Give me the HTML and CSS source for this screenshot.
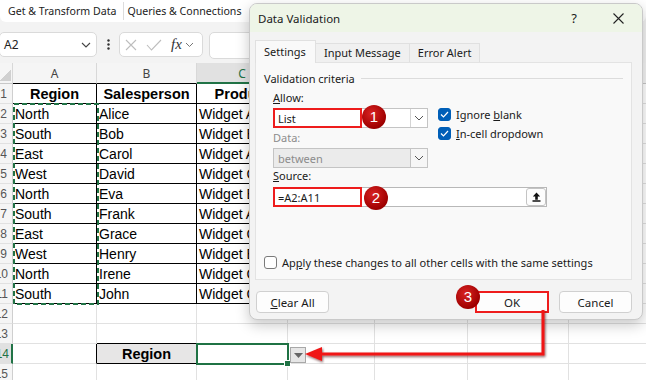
FILE: index.html
```html
<!DOCTYPE html>
<html lang="en">
<head>
<meta charset="UTF-8">
<meta name="viewport" content="width=device-width, initial-scale=1.0">
<link rel="stylesheet" href="styles.css">
</head>
<body>
<div class="window">

  <div class="ribbon">
    <span class="group">Get &amp; Transform Data</span>
    <span class="group sep">Queries &amp; Connections</span>
  </div>

  <div class="formula-bar">
    <div class="name-box">
      <span>A2</span>
      <svg width="10" height="6" viewBox="0 0 10 6"><path d="M1 1l4 4 4-4" fill="none" stroke="#444" stroke-width="1.1"/></svg>
    </div>
    <div class="more">
      <svg width="3" height="11" viewBox="0 0 3 11"><circle cx="1.5" cy="1.5" r="1.2" fill="#333"/><circle cx="1.5" cy="5.5" r="1.2" fill="#333"/><circle cx="1.5" cy="9.5" r="1.2" fill="#333"/></svg>
    </div>
    <div class="fx-box">
      <svg width="12" height="12" viewBox="0 0 12 12"><path d="M1 1l10 10M11 1L1 11" stroke="#bdbdbd" stroke-width="1.1"/></svg>
      <svg width="16" height="12" viewBox="0 0 16 12"><path d="M1 6l4.5 5L15 1" fill="none" stroke="#bdbdbd" stroke-width="1.1"/></svg>
      <span class="fx">fx</span>
      <svg width="9" height="6" viewBox="0 0 9 6"><path d="M1 1l3.5 3.5L8 1" fill="none" stroke="#777" stroke-width="1"/></svg>
    </div>
    <div class="formula-input"></div>
  </div>

  <table class="sheet">
    <colgroup>
      <col style="width:13px"><col style="width:84px"><col style="width:100px"><col style="width:91px">
      <col style="width:87px"><col style="width:93px"><col style="width:101px"><col style="width:87px">
    </colgroup>
    <tr class="col-head">
      <th class="corner"></th><th class="top">A</th><th class="top">B</th><th class="top cur">C</th><th>D</th><th>E</th><th>F</th><th>G</th>
    </tr>
    <tr><th class="rh">1</th><td class="d hd">Region</td><td class="d hd">Salesperson</td><td class="d hd">Product</td><td></td><td></td><td></td><td></td></tr>
    <tr><th class="rh">2</th><td class="d">North</td><td class="d">Alice</td><td class="d">Widget A</td><td></td><td></td><td></td><td></td></tr>
    <tr><th class="rh">3</th><td class="d">South</td><td class="d">Bob</td><td class="d">Widget B</td><td></td><td></td><td></td><td></td></tr>
    <tr><th class="rh">4</th><td class="d">East</td><td class="d">Carol</td><td class="d">Widget A</td><td></td><td></td><td></td><td></td></tr>
    <tr><th class="rh">5</th><td class="d">West</td><td class="d">David</td><td class="d">Widget C</td><td></td><td></td><td></td><td></td></tr>
    <tr><th class="rh">6</th><td class="d">North</td><td class="d">Eva</td><td class="d">Widget B</td><td></td><td></td><td></td><td></td></tr>
    <tr><th class="rh">7</th><td class="d">South</td><td class="d">Frank</td><td class="d">Widget A</td><td></td><td></td><td></td><td></td></tr>
    <tr><th class="rh">8</th><td class="d">East</td><td class="d">Grace</td><td class="d">Widget C</td><td></td><td></td><td></td><td></td></tr>
    <tr><th class="rh">9</th><td class="d">West</td><td class="d">Henry</td><td class="d">Widget B</td><td></td><td></td><td></td><td></td></tr>
    <tr><th class="rh">10</th><td class="d">North</td><td class="d">Irene</td><td class="d">Widget C</td><td></td><td></td><td></td><td></td></tr>
    <tr><th class="rh">11</th><td class="d">South</td><td class="d">John</td><td class="d">Widget C</td><td></td><td></td><td></td><td></td></tr>
    <tr><th class="rh">12</th><td></td><td></td><td></td><td></td><td></td><td></td><td></td></tr>
    <tr><th class="rh">13</th><td></td><td class="above-box"></td><td></td><td></td><td></td><td></td><td></td></tr>
    <tr><th class="rh cur">14</th><td class="left-of-box"></td><td class="d hd lookup">Region</td><td></td><td></td><td></td><td></td><td></td></tr>
    <tr><th class="rh">15</th><td></td><td></td><td></td><td></td><td></td><td></td><td></td></tr>
  </table>

  <!-- copy marquee round A2:A11 -->
  <svg class="ants" width="86" height="202" viewBox="0 0 86 202">
    <rect x="1" y="1" width="84" height="200" fill="none" stroke="#217346" stroke-width="2" stroke-dasharray="5 3"/>
  </svg>

  <div class="active-cell"><span class="handle"></span></div>
  <div class="cell-drop">
    <svg width="9" height="5" viewBox="0 0 9 5"><path d="M0 0h9L4.5 5z" fill="#666"/></svg>
  </div>

  <div class="dialog">
    <div class="title-bar">
      <span class="title">Data Validation</span>
      <span class="help">?</span>
      <svg class="close" width="11" height="11" viewBox="0 0 11 11"><path d="M0.5 0.5l10 10M10.5 0.5l-10 10" stroke="#222" stroke-width="1.1"/></svg>
    </div>
    <div class="dialog-body">
      <div class="tabs">
        <div class="tab active">Settings</div>
        <div class="tab">Input Message</div>
        <div class="tab">Error Alert</div>
      </div>
      <div class="panel">
        <div class="legend"><span>Validation criteria</span></div>
        <div class="criteria">
          <div class="crit-left">
            <div class="label"><u>A</u>llow:</div>
            <div class="select">
              <span class="value">List</span>
              <span class="mark"></span>
              <span class="chev"><svg width="10" height="6" viewBox="0 0 10 6"><path d="M1 1l4 4 4-4" fill="none" stroke="#555" stroke-width="1"/></svg></span>
            </div>
            <div class="label muted">Data:</div>
            <div class="select disabled">
              <span class="value">between</span>
              <span class="chev"><svg width="10" height="6" viewBox="0 0 10 6"><path d="M1 1l4 4 4-4" fill="none" stroke="#555" stroke-width="1"/></svg></span>
            </div>
          </div>
          <div class="checks">
            <div class="check"><span class="box on"><svg width="9" height="7" viewBox="0 0 9 7"><path d="M1 3.5l2.5 2.5L8 1" fill="none" stroke="#fff" stroke-width="1.2"/></svg></span><span>Ignore <u>b</u>lank</span></div>
            <div class="check"><span class="box on"><svg width="9" height="7" viewBox="0 0 9 7"><path d="M1 3.5l2.5 2.5L8 1" fill="none" stroke="#fff" stroke-width="1.2"/></svg></span><span><u>I</u>n-cell dropdown</span></div>
          </div>
        </div>
        <div class="label"><u>S</u>ource:</div>
        <div class="source">
          <span class="value">=A2:A11</span>
          <span class="mark"></span>
          <span class="ref-btn"><svg width="9" height="10" viewBox="0 0 9 10"><path d="M4.5 0.5L0.8 4.5h2.4v3.2h2.6V4.5h2.4z" fill="#111"/><path d="M0.5 9h8" stroke="#111" stroke-width="1.4"/></svg></span>
        </div>
        <div class="check apply"><span class="box"></span><span>Ap<u>p</u>ly these changes to all other cells with the same settings</span></div>
      </div>
      <div class="buttons">
        <button class="btn"><u>C</u>lear All</button>
        <span class="spacer"></span>
        <button class="btn ok">OK</button>
        <button class="btn">Cancel</button>
      </div>
    </div>
  </div>

  <!-- annotations -->
  <span class="badge b1">1</span>
  <span class="badge b2">2</span>
  <span class="badge b3">3</span>
  <svg class="arrow" width="252" height="62" viewBox="0 0 252 62">
    <g filter="url(#sh)">
      <path d="M243 5V49H20" fill="none" stroke="#f01818" stroke-width="3"/>
      <path d="M5 49L22 42V56z" fill="#f01818"/>
    </g>
    <defs>
      <filter id="sh" x="-10%" y="-20%" width="120%" height="160%">
        <feDropShadow dx="1" dy="1.5" stdDeviation="0.8" flood-color="#400" flood-opacity="0.6"/>
      </filter>
    </defs>
  </svg>

</div>
</body>
</html>
```

FILE: styles.css
```css
body {
  margin: 0;
  background: #f3f3f3;
  font-family: "Liberation Sans", Arial, sans-serif;
}

.window {
  position: relative;
  width: 646px;
  height: 380px;
  overflow: hidden;
  background: #f3f3f3;
}

/* ribbon strip */
.ribbon {
  height: 22px;
  display: flex;
  align-items: center;
  background: #fff;
  border-radius: 0 0 6px 6px;
  font: 10.6px "Noto Sans", sans-serif;
  color: #222;
}

.group {
  padding: 0 7px 0 8px;
}

.group.sep {
  border-left: 1px solid #dcdcdc;
  padding-left: 3px;
  height: 18px;
  line-height: 18px;
}

/* formula bar */
.formula-bar {
  height: 41px;
  display: flex;
  align-items: flex-start;
  padding-top: 10px;
  box-sizing: border-box;
}

.name-box {
  width: 98px;
  height: 25px;
  margin-left: -1px;
  box-sizing: border-box;
  display: flex;
  align-items: center;
  justify-content: space-between;
  padding: 0 5px 0 4px;
  background: #fff;
  border: 1px solid #dadada;
  border-radius: 5px;
  font: 12px "Noto Sans", sans-serif;
  color: #222;
}

.more {
  width: 22px;
  height: 25px;
  display: flex;
  align-items: center;
  justify-content: center;
}

.fx-box {
  width: 84px;
  height: 25px;
  box-sizing: border-box;
  display: flex;
  align-items: center;
  gap: 9px;
  padding-left: 5px;
  background: #fff;
  border: 1px solid #dadada;
  border-radius: 5px;
}

.fx {
  font: italic 15px "Liberation Serif", serif;
  color: #333;
  margin-right: -6px;
}

.formula-input {
  width: 60px;
  height: 25px;
  margin-left: 6px;
  background: #fff;
  border: 1px solid #dadada;
  border-radius: 5px;
}

/* grid */
.sheet {
  border-collapse: separate;
  border-spacing: 0;
  table-layout: fixed;
  width: 656px;
  background: #fff;
  font-size: 14px;
  color: #000;
}

.sheet tr {
  height: 20px;
}

.sheet td,
.sheet th {
  padding: 0 2px;
  border-right: 1px solid #e1e1e1;
  border-bottom: 1px solid #e1e1e1;
  white-space: nowrap;
  overflow: hidden;
  text-align: left;
  font-weight: normal;
}

.sheet .col-head {
  height: 21px;
}

.col-head th {
  background: #f5f5f5;
  border-right: 1px solid #d8d8d8;
  border-bottom: 1px solid #c8c8c8;
  text-align: center;
  font: 12px "Noto Sans", sans-serif;
  color: #444;
}

.col-head th.top {
  border-bottom-color: #000;
}

.col-head th.cur {
  background: #e1e1e1;
  color: #217346;
  border-bottom: 1px solid #217346;
  box-shadow: inset 0 -1px 0 #217346;
}

.col-head th.corner {
  background: #f5f5f5 linear-gradient(135deg, transparent 55%, #d0d0d0 55%) no-repeat 0 3px / 11px 15px;
}

.sheet th.rh {
  direction: rtl;
  text-align: right;
  padding: 0 5px 0 0;
  background: #f5f5f5;
  border-right: 1px solid #cfcfcf;
  font-size: 12px;
  color: #555;
}

.sheet th.rh.cur {
  background: #e1e1e1;
  color: #217346;
  border-right: 2px solid #217346;
  padding-right: 4px;
}

.sheet td.d {
  border-right-color: #000;
  border-bottom-color: #000;
}

.sheet td.hd {
  font-weight: bold;
  text-align: center;
  font-size: 14.5px;
}

.sheet td.lookup {
  background: #e7e6e6;
}

.sheet td.above-box {
  border-bottom-color: #000;
}

.sheet td.left-of-box {
  border-right-color: #000;
}

/* overlays on the grid */
.ants {
  position: absolute;
  left: 13px;
  top: 103px;
}

.active-cell {
  position: absolute;
  left: 196px;
  top: 343px;
  width: 93px;
  height: 22px;
  box-sizing: border-box;
  border: 2px solid #1f7244;
}

.handle {
  position: absolute;
  right: -4px;
  bottom: -4px;
  width: 5px;
  height: 5px;
  background: #1f7244;
  border: 1px solid #fff;
}

.cell-drop {
  position: absolute;
  left: 290px;
  top: 347px;
  width: 16px;
  height: 16px;
  box-sizing: border-box;
  display: flex;
  align-items: center;
  justify-content: center;
  background: #e6e6e6;
  border: 1px solid #a8a8a8;
}

/* dialog */
.dialog {
  position: absolute;
  left: 249px;
  top: 3px;
  width: 394px;
  height: 317px;
  box-sizing: border-box;
  background: #f3f3f3;
  border: 1px solid #c9c9c9;
  border-radius: 8px;
  box-shadow: 0 5px 14px rgba(0, 0, 0, 0.22);
  overflow: hidden;
  font: 11px "Noto Sans", sans-serif;
  color: #1a1a1a;
}

.title-bar {
  height: 28px;
  display: flex;
  align-items: center;
  padding: 0 18px 0 8px;
  background: #eef5e7;
}

.title {
  flex: 1;
  font-size: 11.5px;
}

.help {
  font-size: 13px;
  margin-right: 36px;
}

.dialog-body {
  padding: 8px 10px 0 5px;
}

.tabs {
  display: flex;
  align-items: flex-end;
  height: 22px;
  position: relative;
  z-index: 1;
}

.tab {
  height: 19px;
  box-sizing: border-box;
  padding: 0 8px;
  line-height: 18px;
  background: #f0f0f0;
  border: 1px solid #e0e0e0;
  border-bottom: none;
}

.tab + .tab {
  border-left: none;
}

.tab.active {
  height: 23px;
  line-height: 22px;
  margin-bottom: -1px;
  background: #f9f9f9;
  width: 61px;
}

.panel {
  height: 218px;
  box-sizing: border-box;
  padding: 7px 8px 0 8px;
  background: #f9f9f9;
  border: 1px solid #e3e3e3;
}

.legend {
  display: flex;
  align-items: center;
  height: 16px;
}

.legend::after {
  content: "";
  flex: 1;
  height: 1px;
  margin: 0 0 0 6px;
  background: #dcdcdc;
}

.criteria {
  display: flex;
  gap: 10px;
  margin: 4px 0 0 9px;
}

.crit-left {
  width: 155px;
}

.label {
  height: 16px;
  line-height: 16px;
  margin-left: 9px;
}

.crit-left .label {
  margin-left: 0;
}

.crit-left .select + .label {
  margin-top: 2px;
}

.label.muted {
  color: #8c8c8c;
}

.select {
  position: relative;
  height: 20px;
  margin-top: 2px;
  box-sizing: border-box;
  display: flex;
  align-items: center;
  background: #fff;
  border: 1px solid #c4c4c4;
}

.value {
  flex: 1;
  padding-left: 4px;
}

.chev {
  width: 16px;
  height: 18px;
  display: flex;
  align-items: center;
  justify-content: center;
  border-left: 1px solid #d4d4d4;
}

.select.disabled {
  background: #ebebeb;
  color: #8c8c8c;
}

.select.disabled .chev {
  background: #f6f6f6;
  border-left-color: #c4c4c4;
}

.mark {
  position: absolute;
  left: -1px;
  top: -1px;
  width: 89px;
  height: 20px;
  box-sizing: border-box;
  border: 2px solid #ee1c1c;
}

.checks {
  padding-top: 18px;
  display: flex;
  flex-direction: column;
  gap: 6px;
}

.check {
  display: flex;
  align-items: center;
  height: 13px;
}

.box {
  width: 13px;
  height: 13px;
  box-sizing: border-box;
  margin-right: 5px;
  display: flex;
  align-items: center;
  justify-content: center;
  background: #fff;
  border: 1px solid #7a7a7a;
  border-radius: 3px;
}

.box.on {
  background: #005fb8;
  border-color: #005fb8;
}

.source {
  position: relative;
  width: 274px;
  height: 20px;
  margin: 3px 0 0 9px;
  box-sizing: border-box;
  display: flex;
  align-items: center;
  background: #fff;
  border: 1px solid #b8b8b8;
}

.ref-btn {
  width: 20px;
  height: 18px;
  box-sizing: border-box;
  display: flex;
  align-items: center;
  justify-content: center;
  border: 1px solid #c4c4c4;
  border-radius: 3px;
  background: #fdfdfd;
}

.check.apply {
  margin-top: 49px;
}

.buttons {
  display: flex;
  gap: 10px;
  margin-top: 11px;
  padding-left: 1px;
}

.spacer {
  flex: 1;
}

.btn {
  width: 73px;
  height: 22px;
  padding: 0;
  box-sizing: border-box;
  background: #fdfdfd;
  border: 1px solid #d0d0d0;
  border-radius: 4px;
  font: 11.5px "Noto Sans", sans-serif;
  color: #1a1a1a;
}

.btn.ok {
  border: 2px solid #ee1c1c;
  border-radius: 0;
  width: 74px;
}

/* numbered call-outs */
.badge {
  position: absolute;
  width: 24px;
  height: 24px;
  border-radius: 50%;
  background: radial-gradient(circle at 40% 35%, #d92222, #9e0000 70%, #7a0000);
  color: #fff;
  font: 15px "Liberation Sans", Arial, sans-serif;
  line-height: 24px;
  text-align: center;
}

.b1 { left: 362px; top: 105px; }
.b2 { left: 364px; top: 186px; }
.b3 { left: 456px; top: 285px; }

.arrow {
  position: absolute;
  left: 300px;
  top: 305px;
}
```
